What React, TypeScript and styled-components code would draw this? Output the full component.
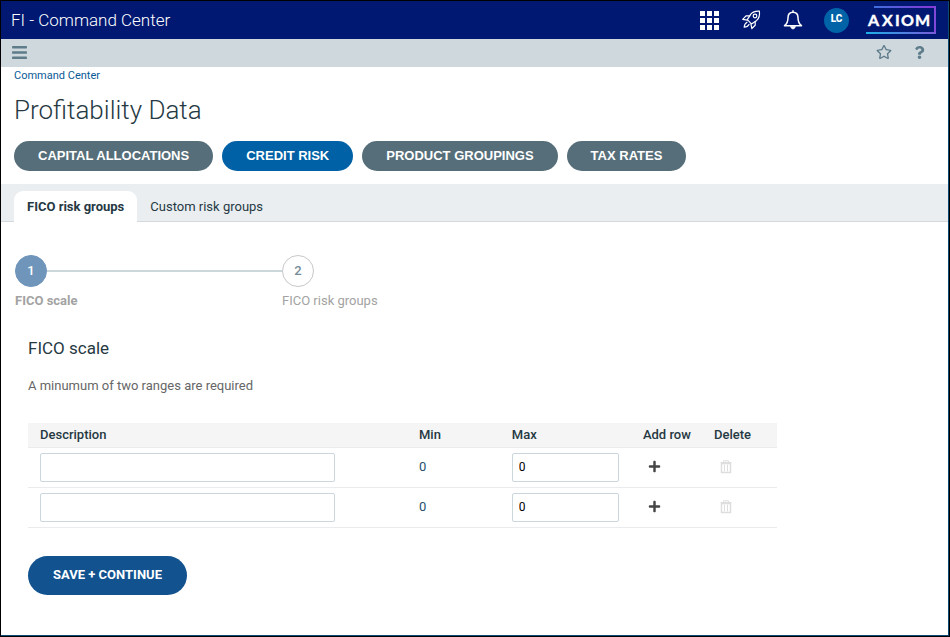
import React, { useState } from "react";
import styled, { createGlobalStyle } from "styled-components";
import { FaBars, FaPlus, FaQuestion, FaRegStar } from "react-icons/fa";

const GlobalStyle = createGlobalStyle`
  *, *::before, *::after { box-sizing: border-box; }
  body { margin: 0; background: #fff; }
  body, button, input { font-family: Roboto, "Liberation Sans", sans-serif; }
`;

const Frame = styled.div`
  min-height: 100vh;
  border: 1px solid #000;
  box-shadow: inset -1px -1px 0 #0f4a73;
  padding: 0 1px 1px 0;
  color: #263943;
  font-size: 13px;
  line-height: 20px;
`;

const Header = styled.header`
  display: flex;
  align-items: center;
  justify-content: space-between;
  height: 38px;
  padding: 0 12px 0 10px;
  background: #001871;
  color: #fff;
`;

const AppName = styled.div`
  font-size: 17px;
  font-weight: 300;
`;

const HeaderActions = styled.div`
  display: flex;
  align-items: center;
`;

const IconButton = styled.button<{ $width: number; $color?: string }>`
  display: inline-flex;
  align-items: center;
  justify-content: center;
  width: ${(p) => p.$width}px;
  height: 24px;
  padding: 0;
  border: 0;
  background: none;
  color: ${(p) => p.$color ?? "inherit"};
  cursor: pointer;
  &:disabled { cursor: default; }
`;

const Avatar = styled.button`
  width: 25px;
  height: 25px;
  margin: 0 17px 0 11px;
  padding: 0 0 2px;
  border: 0;
  border-radius: 50%;
  background: #0063a7;
  color: #fff;
  font-size: 10px;
  line-height: 20px;
  font-weight: 900;
`;

const SubBar = styled.div`
  display: flex;
  align-items: center;
  justify-content: space-between;
  height: 28px;
  padding: 0 12px 2px 6px;
  background: #cfd8dd;
`;

const PageHead = styled.div`
  padding: 0 13px 13px;
`;

const Crumb = styled.a`
  display: block;
  width: fit-content;
  padding-top: 1px;
  color: #0a5a96;
  font-size: 11px;
  line-height: 16px;
  text-decoration: none;
`;

const Title = styled.h1`
  margin: 10px 0 15px;
  font-size: 26px;
  line-height: 32px;
  font-weight: 300;
`;

const PillRow = styled.nav`
  display: flex;
  flex-wrap: wrap;
  gap: 9px;
`;

const Pill = styled.button<{ $active?: boolean }>`
  height: 30px;
  padding: 0 24px 2px;
  border: 0;
  border-radius: 15px;
  background: ${(p) => (p.$active ? "#0061a6" : "#566e79")};
  color: #fff;
  font-family: "Liberation Sans", sans-serif;
  font-size: 13px;
  font-weight: 700;
  cursor: pointer;
`;

const TabStrip = styled.div`
  display: flex;
  align-items: flex-end;
  height: 38px;
  padding: 0 13px;
  background: #eaeef1;
  box-shadow: inset 0 -1px 0 #d5d9dc;
`;

const Tab = styled.button<{ $active: boolean }>`
  height: 31px;
  padding: 0 13px;
  border: 0;
  border-radius: 9px 9px 0 0;
  background: ${(p) => (p.$active ? "#fff" : "transparent")};
  color: #263943;
  font-size: 13px;
  font-weight: ${(p) => (p.$active ? 700 : 400)};
  cursor: pointer;
`;

const Steps = styled.ol`
  display: flex;
  margin: 0;
  padding: 33px 14px 0;
  list-style: none;
`;

const Step = styled.li`
  width: 267px;
`;

const StepTrack = styled.div<{ $line?: boolean }>`
  display: flex;
  align-items: center;
  &::after {
    content: "";
    flex: 1;
    height: 2px;
    background: ${(p) => (p.$line ? "#cbd7da" : "transparent")};
  }
`;

const StepDot = styled.span<{ $active?: boolean }>`
  display: flex;
  align-items: center;
  justify-content: center;
  width: 32px;
  height: 32px;
  border: 1px solid ${(p) => (p.$active ? "#7095bb" : "#c8c8c8")};
  border-radius: 50%;
  background: ${(p) => (p.$active ? "#7095bb" : "#fff")};
  color: ${(p) => (p.$active ? "#fff" : "#768d98")};
  font-weight: 500;
`;

const StepLabel = styled.div<{ $active?: boolean }>`
  margin-top: 4px;
  color: #a3a3a3;
  font-weight: ${(p) => (p.$active ? 700 : 400)};
`;

const Panel = styled.main`
  padding: 25px 27px 24px;
`;

const SectionTitle = styled.h2`
  margin: 0;
  font-size: 17px;
  line-height: 24px;
  font-weight: 400;
`;

const Hint = styled.p`
  margin: 16px 0 27px;
  color: #666;
`;

const Grid = styled.table`
  width: 100%;
  max-width: 749px;
  border-collapse: collapse;
  table-layout: fixed;
`;

const HeadCell = styled.th<{ $share?: number }>`
  width: ${(p) => (p.$share ? p.$share + "%" : "auto")};
  height: 24px;
  padding: 0 0 0 12px;
  border-bottom: 1px solid #e9ebec;
  background: #f5f5f5;
  text-align: left;
  font-weight: 500;
`;

const Cell = styled.td`
  height: 40px;
  padding: 0 0 0 12px;
  border-bottom: 1px solid #e9ebec;
  vertical-align: middle;
`;

const TextInput = styled.input<{ $width: number }>`
  display: block;
  width: ${(p) => p.$width}px;
  max-width: 100%;
  height: 29px;
  padding: 0 6px;
  border: 1px solid #cbd7dc;
  border-radius: 2px;
  background: #fff;
  color: #000;
  font-size: 12px;
`;

const MinValue = styled.span`
  color: #24506e;
`;

const SaveButton = styled.button`
  height: 39px;
  margin-top: 28px;
  padding: 0 25px 2px;
  border: 0;
  border-radius: 20px;
  background: #11528f;
  color: #fff;
  font-size: 13px;
  font-weight: 700;
  cursor: pointer;
`;

const AppsIcon = () => (
  <svg width="19" height="19" viewBox="0 0 19 19" fill="#fff" aria-hidden="true">
    {[0, 7, 14].flatMap((y) =>
      [0, 7, 14].map((x) => <rect key={`${x}-${y}`} x={x} y={y} width="5" height="5" />)
    )}
  </svg>
);

const RocketIcon = () => (
  <svg width="20" height="20" viewBox="0 0 20 20" fill="none" stroke="#fff" strokeWidth="1.2" strokeLinejoin="round" strokeLinecap="round" aria-hidden="true">
    <path d="M18.400 1.200C14.500.9 11.800 2 9.800 4.200L6.300 9.600l4.200 4.300 5.200-3.500c2.300-2 3.200-5.100 2.700-9.200z" />
    <path d="M8.800 5.800H5L1.700 9.300l4.600.8M14.200 11.500v3.800l-3.400 3.200-.9-4.700" />
    <circle cx="14" cy="6" r="1.800" />
    <path d="M6 12.200c-1.700 1-2.700 2.700-2.800 5 2.100-.1 3.900-1 4.800-2.800" />
  </svg>
);

const BellIcon = () => (
  <svg width="20" height="20" viewBox="0 0 20 20" fill="none" stroke="#fff" strokeWidth="1.500" strokeLinejoin="round" strokeLinecap="round" aria-hidden="true">
    <path d="M10 .8v1.500M10 2.300C6.500 2.300 5 4.800 5 7.800c0 4.300-1.100 6.200-3.500 7.900h17C16.100 14 15 12.100 15 7.800c0-3-1.500-5.500-5-5.500z" />
    <path d="M7.800 16.500c.2 1.800 1.100 2.300 2.200 2.300s2-.5 2.200-2.300z" fill="#fff" strokeWidth="1" />
  </svg>
);

const AxiomLogo = () => (
  <svg width="70" height="28" viewBox="0 0 70 28" role="img" aria-label="Axiom">
    <defs>
      <linearGradient id="axiom-top" x1="0" x2="1" y1="0" y2="0">
        <stop offset="0" stopColor="#3f6fdc" />
        <stop offset="1" stopColor="#8a35d6" />
      </linearGradient>
      <linearGradient id="axiom-bottom" x1="0" x2="1" y1="0" y2="0">
        <stop offset="0" stopColor="#1cb0ea" />
        <stop offset="1" stopColor="#7a5ad8" />
      </linearGradient>
    </defs>
    <rect x="8" y="0" width="62" height="2" fill="url(#axiom-top)" />
    <rect x="68" y="0" width="2" height="28" fill="#8048d8" />
    <rect x="0" y="26" width="70" height="2" fill="url(#axiom-bottom)" />
    <text x="2 16 29 35 49" y="20" fill="#fff" fontFamily="Lato, sans-serif" fontSize="16" fontWeight="700" stroke="#fff" strokeWidth="0.400">AXIOM</text>
  </svg>
);

const TrashIcon = () => (
  <svg width="12" height="14" viewBox="0 0 12 14" fill="none" stroke="#dedede" aria-hidden="true">
    <path d="M.5 2.500h11M3.500 2V.8h5V2" />
    <path d="M1.500 3.500v9h9v-9z" strokeWidth="1.500" />
    <path d="M4.500 4.500v7M7.500 4.500v7" />
  </svg>
);

const sections = ["CAPITAL ALLOCATIONS", "CREDIT RISK", "PRODUCT GROUPINGS", "TAX RATES"];
const tabs = ["FICO risk groups", "Custom risk groups"];

export default function App() {
  const [section, setSection] = useState("CREDIT RISK");
  const [tab, setTab] = useState(tabs[0]);
  const [rows, setRows] = useState([0, 1]);

  return (
    <>
      <GlobalStyle />
      <Frame>
        <Header>
          <AppName>FI - Command Center</AppName>
          <HeaderActions>
            <IconButton $width={41} aria-label="Applications"><AppsIcon /></IconButton>
            <IconButton $width={42} aria-label="Launch"><RocketIcon /></IconButton>
            <IconButton $width={41} aria-label="Notifications"><BellIcon /></IconButton>
            <Avatar aria-label="Account LC">LC</Avatar>
            <AxiomLogo />
          </HeaderActions>
        </Header>
        <SubBar>
          <IconButton $width={24} $color="#5e7c8a" aria-label="Menu"><FaBars size={17} /></IconButton>
          <HeaderActions>
            <IconButton $width={36} $color="#5e7c8a" aria-label="Favorite"><FaRegStar size={16} /></IconButton>
            <IconButton $width={34} $color="#5e7c8a" aria-label="Help"><FaQuestion size={13} /></IconButton>
          </HeaderActions>
        </SubBar>
        <PageHead>
          <Crumb href="#">Command Center</Crumb>
          <Title>Profitability Data</Title>
          <PillRow>
            {sections.map((name) => (
              <Pill key={name} $active={name === section} onClick={() => setSection(name)}>{name}</Pill>
            ))}
          </PillRow>
        </PageHead>
        <TabStrip role="tablist">
          {tabs.map((name) => (
            <Tab key={name} role="tab" aria-selected={name === tab} $active={name === tab} onClick={() => setTab(name)}>{name}</Tab>
          ))}
        </TabStrip>
        <Steps>
          <Step>
            <StepTrack $line><StepDot $active>1</StepDot></StepTrack>
            <StepLabel $active>FICO scale</StepLabel>
          </Step>
          <Step>
            <StepTrack><StepDot>2</StepDot></StepTrack>
            <StepLabel>FICO risk groups</StepLabel>
          </Step>
        </Steps>
        <Panel>
          <SectionTitle>FICO scale</SectionTitle>
          <Hint>A minumum of two ranges are required</Hint>
          <Grid>
            <thead>
              <tr>
                <HeadCell $share={50.6}>Description</HeadCell>
                <HeadCell $share={12.4}>Min</HeadCell>
                <HeadCell $share={17.5}>Max</HeadCell>
                <HeadCell $share={9.5}>Add row</HeadCell>
                <HeadCell>Delete</HeadCell>
              </tr>
            </thead>
            <tbody>
              {rows.map((id, i) => (
                <tr key={id}>
                  <Cell><TextInput $width={295} aria-label={`Description ${i + 1}`} /></Cell>
                  <Cell><MinValue>0</MinValue></Cell>
                  <Cell><TextInput $width={107} defaultValue="0" aria-label={`Max ${i + 1}`} /></Cell>
                  <Cell>
                    <IconButton $width={24} $color="#444" aria-label="Add row" onClick={() => setRows([...rows, Math.max(...rows) + 1])}>
                      <FaPlus size={13} />
                    </IconButton>
                  </Cell>
                  <Cell>
                    <IconButton
                      $width={24}
                      aria-label="Delete row"
                      disabled={rows.length <= 2}
                      onClick={() => setRows(rows.filter((r) => r !== id))}
                    >
                      <TrashIcon />
                    </IconButton>
                  </Cell>
                </tr>
              ))}
            </tbody>
          </Grid>
          <SaveButton>SAVE + CONTINUE</SaveButton>
        </Panel>
      </Frame>
    </>
  );
}
